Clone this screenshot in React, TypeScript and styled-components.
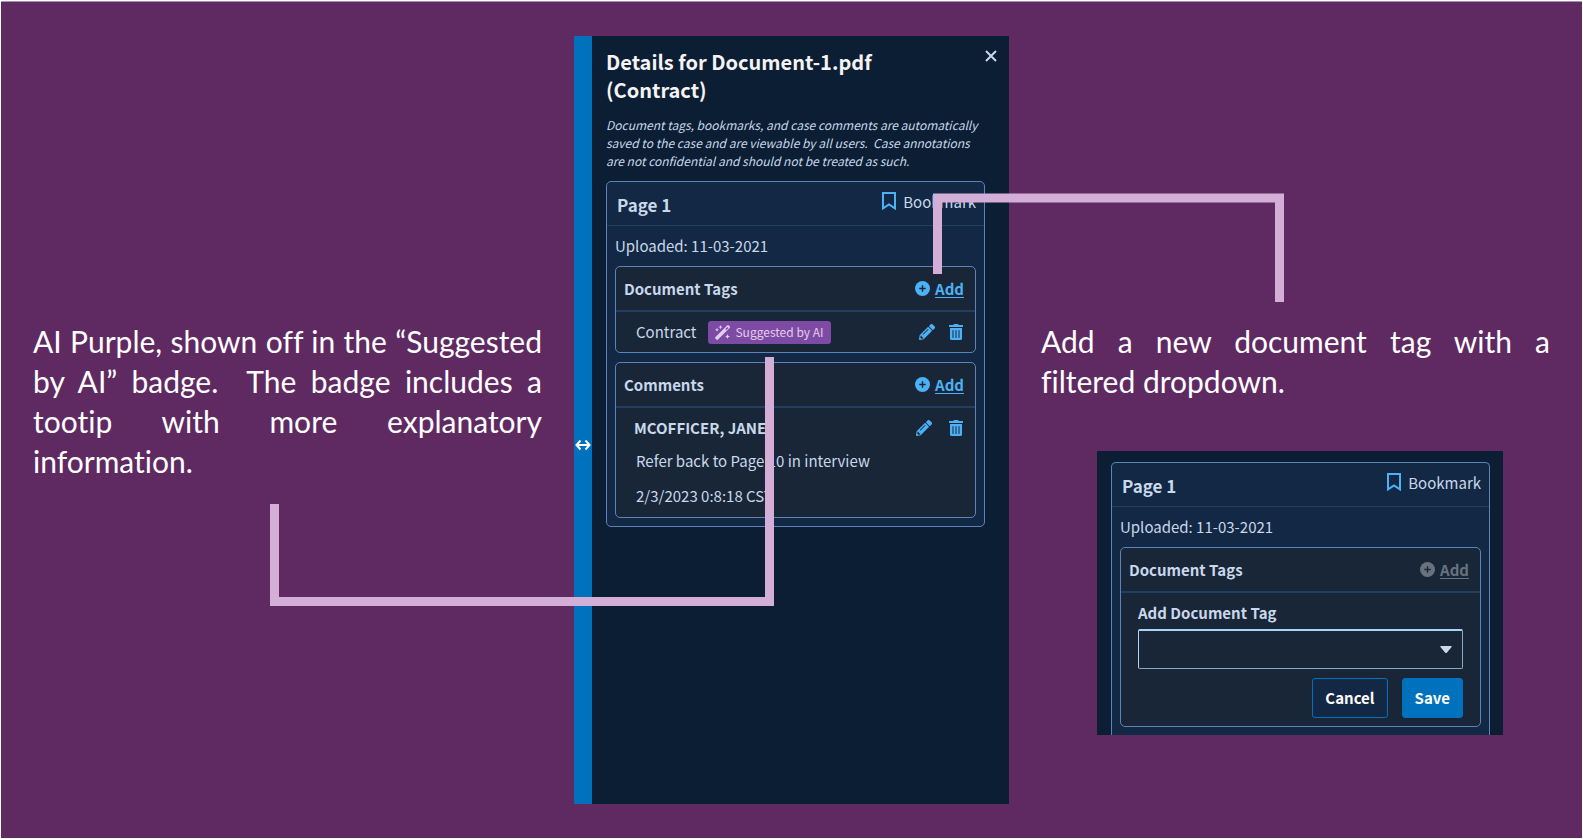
import React, { useId } from "react";
import styled, { createGlobalStyle, css } from "styled-components";
import { FaPencilAlt, FaTrashAlt } from "react-icons/fa";

const c = {
  purple: "#5f2a62",
  pink: "#d3afd7",
  navy: "#0b1e33",
  card: "#132844",
  inner: "#182638",
  line: "#5b85b8",
  divider: "#213f63",
  blue: "#0071bc",
  sky: "#4db1f5",
  text: "#c9d8ea",
};

const Global = createGlobalStyle`
  *, *::before, *::after { box-sizing: border-box; }
  body { margin: 0; background: ${c.purple}; }
`;

const Page = styled.main`
  display: grid;
  grid-template-columns: 1fr 435px 1fr;
  min-height: 100vh;
  padding-top: 35px;
  border: 1px solid #fff;
  box-shadow: inset 0 1px #a88faa;
  background: ${c.purple};
  color: ${c.text};
  font: 400 16px/24px "Noto Sans CJK SC", "Open Sans", sans-serif;
`;

const SideColumn = styled.section`
  display: flex;
  flex-direction: column;
  padding: 285px 32px 0;
`;

const Caption = styled.p`
  margin: 0;
  color: #fff;
  font: 400 30px/40px Lato, sans-serif;
  font-variant-ligatures: none;
`;

const CaptionLine = styled.span`
  display: block;
  text-align-last: justify;
  &:last-child { text-align-last: left; }
`;

const Panel = styled.aside`
  position: relative;
  display: flex;
  align-self: start;
  min-height: 768px;
  background: ${c.navy};
`;

const ResizeBar = styled.div`
  display: flex;
  flex: 0 0 18px;
  align-items: center;
  justify-content: center;
  padding-top: 50px;
  background: ${c.blue};
`;

const PanelBody = styled.div`
  flex: 1;
  padding: 12px 24px 0 14px;
`;

const PanelHeader = styled.header`
  display: flex;
  justify-content: space-between;
  align-items: flex-start;
`;

const Title = styled.h1`
  width: 300px;
  margin: 0;
  color: #f5f3f3;
  font-size: 20px;
  font-weight: 700;
  line-height: 28px;
`;

const Notice = styled.p`
  margin: 12px 0 11px;
  font-size: 12px;
  font-style: italic;
  line-height: 18px;
`;

const IconButton = styled.button`
  display: inline-flex;
  padding: 0;
  border: 0;
  background: none;
  color: ${c.sky};
  font-size: 16px;
`;

const CloseButton = styled(IconButton)`
  margin: 2px -12px 0 0;
  color: ${c.text};
`;

const PageCard = styled.article<{ $cut?: boolean }>`
  display: flex;
  flex-direction: column;
  gap: 9px;
  padding-bottom: 8px;
  border: 1px solid ${c.line};
  border-radius: 5px;
  background: ${c.card};
  ${(p) => p.$cut && css`
    border-bottom: 0;
    border-radius: 5px 5px 0 0;
  `}
`;

const PageHeader = styled.header`
  display: flex;
  justify-content: space-between;
  height: 44px;
  padding: 8px 8px 0 10px;
  border-bottom: 1px solid ${c.divider};
`;

const PageTitle = styled.h2`
  margin: 3px 0 0;
  font-size: 17px;
  font-weight: 700;
  line-height: 24px;
`;

const BookmarkButton = styled.button`
  display: inline-flex;
  gap: 7px;
  height: 24px;
  padding: 0;
  border: 0;
  background: none;
  color: inherit;
  font: inherit;
  font-size: 15px;
  svg { margin-top: 2px; }
`;

const Uploaded = styled.p`
  margin: 0 8px;
  font-size: 15px;
  line-height: 22px;
`;

const Section = styled.section`
  margin: 0 8px;
  border: 1px solid ${c.line};
  border-radius: 5px;
  background: ${c.inner};
`;

const SectionHeader = styled.header`
  display: flex;
  align-items: center;
  justify-content: space-between;
  height: 45px;
  padding: 0 11px 0 8px;
  border-bottom: 2px solid ${c.divider};
`;

const SectionTitle = styled.h3`
  margin: 0;
  font-size: 15px;
  font-weight: 700;
  line-height: 24px;
`;

const AddButton = styled.button`
  display: inline-flex;
  align-items: center;
  gap: 5px;
  padding: 0;
  border: 0;
  background: none;
  color: ${c.sky};
  font: inherit;
  font-size: 15px;
  font-weight: 700;
  span { text-decoration: underline; text-underline-offset: 2px; }
  &:disabled { color: #68727f; }
`;

const TagRow = styled.div`
  display: flex;
  align-items: center;
  gap: 12px;
  height: 40px;
  padding: 0 11px 0 20px;
  font-size: 15px;
`;

const Badge = styled.span`
  display: inline-flex;
  align-items: center;
  gap: 5px;
  height: 23px;
  padding: 0 7px;
  border-radius: 3px;
  background: #7d4ba3;
  color: #e3cdf0;
  font-size: 12px;
`;

const Actions = styled.div<{ $gap: number }>`
  display: flex;
  gap: ${(p) => p.$gap}px;
  margin-left: auto;
`;

const Comment = styled.div`
  display: flex;
  flex-direction: column;
  gap: 11px;
  padding: 8px 11px 9px 20px;
  font-size: 15px;
  p { margin: 0; line-height: 24px; }
`;

const CommentTop = styled.div`
  display: flex;
  align-items: center;
  margin: 0 0 -2px -2px;
  font-weight: 700;
`;

const Connector = styled.svg<{ $left: number; $top: number }>`
  position: absolute;
  left: ${(p) => p.$left}px;
  top: ${(p) => p.$top}px;
  fill: none;
  stroke: ${c.pink};
  stroke-width: 9;
  pointer-events: none;
`;

const Example = styled.div`
  align-self: flex-end;
  width: 406px;
  margin: 50px 47px 0 0;
  padding: 11px 13px 0 14px;
  background: ${c.navy};
`;

const Form = styled.form`
  display: flex;
  flex-direction: column;
  padding: 8px 17px;
`;

const Label = styled.label`
  font-size: 15px;
  font-weight: 700;
  line-height: 24px;
`;

const SelectBox = styled.div`
  display: grid;
  align-items: center;
  margin: 4px 0 9px;
  > * { grid-area: 1 / 1; }
  svg { justify-self: end; margin-right: 11px; pointer-events: none; }
`;

const Select = styled.select`
  appearance: none;
  height: 40px;
  border: 1px solid #86a9c4;
  border-top: 2px solid #a9d3f7;
  border-left-color: #a9d3f7;
  border-radius: 2px;
  background: ${c.inner};
  color: ${c.text};
`;

const Buttons = styled.div`
  display: flex;
  justify-content: flex-end;
  gap: 14px;
`;

const Button = styled.button<{ $primary?: boolean }>`
  height: 40px;
  padding: 0 12px;
  border: 1px solid ${c.blue};
  border-radius: 3px;
  background: ${(p) => (p.$primary ? c.blue : c.card)};
  color: #fff;
  font: inherit;
  font-size: 15px;
  font-weight: 700;
`;

const PlusIcon = () => (
  <svg width="15" height="15" viewBox="0 0 15 15">
    <circle cx="7.5" cy="7.5" r="7.5" fill="currentColor" />
    <path d="M7.5 4.3v6.4M4.3 7.5h6.4" stroke={c.inner} strokeWidth="1.4" />
  </svg>
);

const BookmarkIcon = () => (
  <svg width="14" height="18" viewBox="0 0 14 18">
    <path d="M1 1h12v15.4l-6-4-6 4z" fill="none" stroke={c.sky} strokeWidth="2" />
  </svg>
);

const WandIcon = () => (
  <svg width="15" height="15" viewBox="0 0 15 15" fill="currentColor">
    <path d="M12.1.5a1.2 1.2 0 0 1 1.7 0l.8.8a1.2 1.2 0 0 1 0 1.7L3 14.5a1.2 1.2 0 0 1-1.7 0l-.8-.8a1.2 1.2 0 0 1 0-1.7zM10.4 4l1 1 2-2-1-1z" fillRule="evenodd" />
    <path d="m5.5 0 .6 1.5 1.5.6-1.5.6-.6 1.5-.6-1.5-1.5-.6 1.5-.6zM2 2.8l.6 1.4 1.4.6-1.4.6L2 6.8l-.6-1.4L0 4.8l1.4-.6zM12.5 9l.7 1.8 1.8.7-1.8.7-.7 1.8-.7-1.8-1.8-.7 1.8-.7z" />
  </svg>
);

const ResizeIcon = () => (
  <svg width="16" height="12" viewBox="0 0 16 12" fill="none" stroke="#fff" strokeWidth="2">
    <path d="M2 6h12M5.5 1.500l-4 4.500 4 4.500M10.500 1.500l4 4.500-4 4.500" />
  </svg>
);

const CloseIcon = () => (
  <svg width="12" height="12" viewBox="0 0 12 12" stroke="currentColor" strokeWidth="2">
    <path d="M1 1l10 10M11 1 1 11" />
  </svg>
);

const CaretIcon = () => (
  <svg width="12" height="7" viewBox="0 0 12 7" fill={c.text}>
    <path d="M1 0h10q1 0 .6 1L7 6.4q-1 1-2 0L.4 1Q0 0 1 0z" />
  </svg>
);

const RowActions = ({ gap, item }: { gap: number; item: string }) => (
  <Actions $gap={gap}>
    <IconButton type="button" aria-label={`Edit ${item}`}><FaPencilAlt /></IconButton>
    <IconButton type="button" aria-label={`Delete ${item}`}><FaTrashAlt /></IconButton>
  </Actions>
);

const CardTop = () => (
  <>
    <PageHeader>
      <PageTitle>Page 1</PageTitle>
      <BookmarkButton type="button"><BookmarkIcon />Bookmark</BookmarkButton>
    </PageHeader>
    <Uploaded>Uploaded: 11-03-2021</Uploaded>
  </>
);

const SectionTop = ({ title, disabled }: { title: string; disabled?: boolean }) => (
  <SectionHeader>
    <SectionTitle>{title}</SectionTitle>
    <AddButton type="button" disabled={disabled}><PlusIcon /><span>Add</span></AddButton>
  </SectionHeader>
);

export default function App() {
  const tagId = useId();
  return (
    <>
      <Global />
      <Page>
        <SideColumn>
          <Caption>
            <CaptionLine>AI Purple, shown off in the “Suggested </CaptionLine>
            <CaptionLine>by AI” badge. &nbsp;The badge includes a </CaptionLine>
            <CaptionLine>tootip with more explanatory </CaptionLine>
            <CaptionLine>information.</CaptionLine>
          </Caption>
        </SideColumn>

        <Panel>
          <ResizeBar><ResizeIcon /></ResizeBar>
          <PanelBody>
            <PanelHeader>
              <Title>Details for Document-1.pdf (Contract)</Title>
              <CloseButton type="button" aria-label="Close"><CloseIcon /></CloseButton>
            </PanelHeader>
            <Notice>
              Document tags, bookmarks, and case comments are automatically saved to the case and are
              viewable by all users. &nbsp;Case annotations are not confidential and should not be
              treated as such.
            </Notice>
            <PageCard>
              <CardTop />
              <Section>
                <SectionTop title="Document Tags" />
                <TagRow>
                  Contract
                  <Badge><WandIcon />Suggested by AI</Badge>
                  <RowActions gap={13} item="tag" />
                </TagRow>
              </Section>
              <Section>
                <SectionTop title="Comments" />
                <Comment>
                  <CommentTop>
                    MCOFFICER, JANE
                    <RowActions gap={16} item="comment" />
                  </CommentTop>
                  <p>Refer back to Page 10 in interview</p>
                  <p>2/3/2023 0:8:18 CST</p>
                </Comment>
              </Section>
            </PageCard>
          </PanelBody>
          <Connector $left={-304} $top={321} width="504" height="249" aria-hidden="true">
            <path d="M4.5 147v97.5h495V0" />
          </Connector>
          <Connector $left={359} $top={157} width="351" height="109" aria-hidden="true">
            <path d="M4.5 81V5h342v104" />
          </Connector>
        </Panel>

        <SideColumn>
          <Caption>
            <CaptionLine>Add a new document tag with a </CaptionLine>
            <CaptionLine>filtered dropdown.</CaptionLine>
          </Caption>
          <Example>
            <PageCard $cut>
              <CardTop />
              <Section>
                <SectionTop title="Document Tags" disabled />
                <Form>
                  <Label htmlFor={tagId}>Add Document Tag</Label>
                  <SelectBox>
                    <Select id={tagId} />
                    <CaretIcon />
                  </SelectBox>
                  <Buttons>
                    <Button type="button">Cancel</Button>
                    <Button type="button" $primary>Save</Button>
                  </Buttons>
                </Form>
              </Section>
            </PageCard>
          </Example>
        </SideColumn>
      </Page>
    </>
  );
}
